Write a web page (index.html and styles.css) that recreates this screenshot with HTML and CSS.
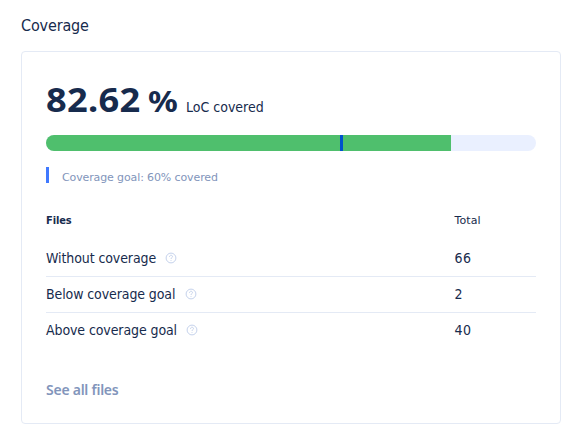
FILE: index.html
```html
<!DOCTYPE html>
<html lang="en">
<head>
<meta charset="utf-8">
<title>Coverage</title>
<link rel="stylesheet" href="styles.css">
</head>
<body>
<h1 class="title"><span>Coverage</span></h1>
<section class="card">
  <div class="headline"><span class="value">82.62</span><span class="percent">%</span><span class="unit">LoC covered</span></div>
  <div class="bar"><div class="fill"></div><div class="marker"></div></div>
  <div class="goal"><span>Coverage goal: 60% covered</span></div>
  <div class="row head"><div class="name"><b>Files</b></div><div class="total">Total</div></div>
  <div class="row"><div class="name"><span>Without coverage</span><svg class="help" viewBox="0 0 12 12"><circle cx="6" cy="6" r="4.9"/><path d="M4.5 4.8C4.5 2.8 7.5 2.8 7.5 4.6C7.5 5.7 6 5.7 6 7M6 8.2V9"/></svg></div><div class="total">66</div></div>
  <div class="row"><div class="name"><span>Below coverage goal</span><svg class="help" viewBox="0 0 12 12"><circle cx="6" cy="6" r="4.9"/><path d="M4.5 4.8C4.5 2.8 7.5 2.8 7.5 4.6C7.5 5.7 6 5.7 6 7M6 8.2V9"/></svg></div><div class="total">2</div></div>
  <div class="row last"><div class="name"><span>Above coverage goal</span><svg class="help" viewBox="0 0 12 12"><circle cx="6" cy="6" r="4.9"/><path d="M4.5 4.8C4.5 2.8 7.5 2.8 7.5 4.6C7.5 5.7 6 5.7 6 7M6 8.2V9"/></svg></div><div class="total">40</div></div>
  <a class="all">See all files</a>
</section>
</body>
</html>
```
FILE: styles.css
```css
* { box-sizing: border-box; }
body { margin: 0; padding: 14px 17px 12px 21px; background: #fff; color: #172b4d; font-family: "DejaVu Sans Condensed", "DejaVu Sans", sans-serif; }
.title { margin: 0 0 13px; font-size: 16px; line-height: 24px; font-weight: 400; letter-spacing: -0.15px; }
.card { height: 373px; border: 1px solid #e4eaf5; border-radius: 4px; padding: 24px; }
.headline { display: flex; align-items: baseline; height: 59px; line-height: 47px; }
.value { width: 95px; font-family: "Noto Sans", sans-serif; font-size: 34px; font-weight: 700; letter-spacing: 0.3px; transform: scaleX(1.065); transform-origin: left; }
.percent { width: 26px; margin-left: 7px; font-family: "Noto Sans", sans-serif; font-size: 28px; font-weight: 700; transform: scaleX(1.18); transform-origin: left; }
.unit { margin-left: 12px; font-size: 14px; }
.bar { position: relative; height: 16px; border-radius: 8px; background: #eaf0ff; overflow: hidden; }
.fill { width: 405px; height: 16px; background: #4fbf6d; }
.marker { position: absolute; left: 60%; top: 0; width: 3px; height: 16px; background: #0052cc; }
.goal { margin-top: 16px; height: 16px; padding-left: 13px; border-left: 3px solid #4079ff; font-family: "DejaVu Sans", sans-serif; font-size: 11px; line-height: 22px; letter-spacing: -0.12px; color: #8295bb; }
.row { display: grid; grid-template-columns: 408.5px 1fr; height: 36px; line-height: 35px; font-size: 14px; border-bottom: 1px solid #e4eaf5; }
.row .name { display: flex; align-items: center; height: 35px; letter-spacing: -0.1px; }
.total { letter-spacing: 0.4px; }
.head { height: 38px; margin-top: 20px; line-height: 36px; font-size: 11px; border-color: transparent; }
.head .total { font-family: "DejaVu Sans", sans-serif; letter-spacing: 0.1px; }
.last { border-color: transparent; }
.help { width: 12px; height: 12px; margin: 0 0 1px 9.4px; fill: none; stroke: #c5d2ec; stroke-width: 1; }
.all { display: block; margin-top: 29px; font-family: "Noto Sans", sans-serif; font-size: 14px; line-height: 24px; font-weight: 600; letter-spacing: -0.25px; color: #8295bb; }
```
